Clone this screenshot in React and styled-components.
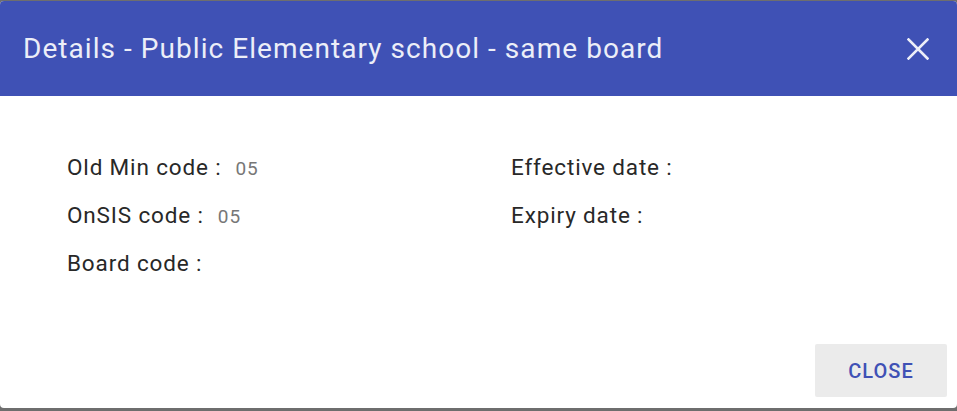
import React from "react";
import styled, { createGlobalStyle } from "styled-components";

const GlobalStyle = createGlobalStyle`
  html, body {
    margin: 0;
    padding: 0;
    background: #6e6e6e;
    font-family: Roboto, "Noto Sans", Arial, sans-serif;
  }
  #root {
    height: 411px;
    padding-top: 1px;
    box-sizing: border-box;
  }
`;

const Dialog = styled.div`
  width: 957px;
  height: 407px;
  background: #ffffff;
  border-radius: 4px;
  overflow: hidden;
  display: flex;
  flex-direction: column;
`;

const Header = styled.div`
  height: 95px;
  background: #3f51b5;
  display: flex;
  align-items: center;
  justify-content: space-between;
  padding: 0 23px 0 23px;
  box-sizing: border-box;
`;

const Title = styled.h2`
  margin: 0;
  font-size: 28px;
  font-weight: 400;
  color: #eceef8;
  letter-spacing: 1.05px;
`;

const CloseIcon = styled.button`
  border: none;
  background: transparent;
  padding: 0;
  width: 32px;
  height: 32px;
  display: flex;
  align-items: center;
  justify-content: center;
  cursor: pointer;
`;

const Content = styled.div`
  flex: 1;
  display: grid;
  grid-template-columns: 444px 1fr;
  padding: 56px 0 0 67px;
  align-content: start;
`;

const Column = styled.div`
  display: flex;
  flex-direction: column;
  gap: 18px;
`;

const Row = styled.div`
  display: flex;
  align-items: baseline;
  height: 30px;
  line-height: 30px;
`;

const Label = styled.span`
  font-size: 22.5px;
  color: #282828;
  letter-spacing: 0.85px;
`;

const Value = styled.span`
  font-size: 19px;
  color: #777777;
  margin-left: 14px;
  letter-spacing: 0.9px;
`;

const Footer = styled.div`
  display: flex;
  justify-content: flex-end;
  padding: 0 10px 11px 0;
`;

const Button = styled.button`
  width: 132px;
  height: 53px;
  border: none;
  border-radius: 2px;
  background: #ebebeb;
  color: #3f51b5;
  font-family: Roboto, Arial, sans-serif;
  font-size: 20px;
  font-weight: 500;
  letter-spacing: 1px;
  cursor: pointer;
`;

const Field = ({ label, value }) => (
  <Row>
    <Label>{label}</Label>
    {value && <Value>{value}</Value>}
  </Row>
);

const App = () => {
  return (
    <>
      <GlobalStyle />
      <Dialog>
        <Header>
          <Title>Details - Public Elementary school - same board</Title>
          <CloseIcon aria-label="close">
            <svg width="22" height="22" viewBox="0 0 22 22">
              <path
                d="M1.5 1.5 L20.5 20.5 M20.5 1.5 L1.5 20.5"
                stroke="#eceef8"
                strokeWidth="2.6"
                strokeLinecap="square"
              />
            </svg>
          </CloseIcon>
        </Header>
        <Content>
          <Column>
            <Field label="Old Min code :" value="05" />
            <Field label="OnSIS code :" value="05" />
            <Field label="Board code :" />
          </Column>
          <Column>
            <Field label="Effective date :" />
            <Field label="Expiry date :" />
          </Column>
        </Content>
        <Footer>
          <Button>CLOSE</Button>
        </Footer>
      </Dialog>
    </>
  );
};

export default App;
